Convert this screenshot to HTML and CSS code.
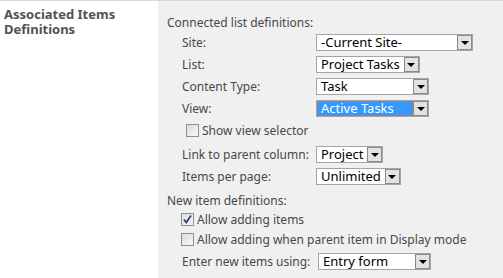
FILE: index.html
```html
<!DOCTYPE html>
<html lang="en">
<head>
  <meta charset="UTF-8" />
  <title>Associated Items Definitions</title>
  <link rel="stylesheet" href="styles.css">
</head>
<body>
  <div class="section">
    <div class="section-title">Associated Items Definitions</div>

    <div class="section-body">
      <div class="group-title">Connected list definitions:</div>

      <div class="fields">
        <div class="field">
          <label>Site:</label>
          <span class="dropdown w-site"><span class="value">-Current Site-</span><span class="arrow"></span></span>
        </div>
        <div class="field">
          <label>List:</label>
          <span class="dropdown"><span class="value">Project Tasks</span><span class="arrow"></span></span>
        </div>
        <div class="field">
          <label>Content Type:</label>
          <span class="dropdown w-type"><span class="value">Task</span><span class="arrow"></span></span>
        </div>
        <div class="field">
          <label>View:</label>
          <span class="dropdown w-type focused"><span class="value">Active Tasks</span><span class="arrow"></span></span>
        </div>
      </div>

      <div class="check view-check">
        <span class="box"></span>
        <span>Show view selector</span>
      </div>

      <div class="fields">
        <div class="field">
          <label>Link to parent column:</label>
          <span class="dropdown"><span class="value">Project</span><span class="arrow"></span></span>
        </div>
        <div class="field">
          <label>Items per page:</label>
          <span class="dropdown"><span class="value">Unlimited</span><span class="arrow"></span></span>
        </div>
      </div>

      <div class="group-title second">New item definitions:</div>

      <div class="check first">
        <span class="box checked">
          <svg width="11" height="11" viewBox="0 0 11 11"><path d="M2 5.5 L4.3 8.5 L9 1.5" fill="none" stroke="#2b3e8c" stroke-width="1.8"/></svg>
        </span>
        <span>Allow adding items</span>
      </div>
      <div class="check">
        <span class="box"></span>
        <span>Allow adding when parent item in Display mode</span>
      </div>

      <div class="field entry">
        <label>Enter new items using:</label>
        <span class="dropdown w-type"><span class="value">Entry form</span><span class="arrow"></span></span>
      </div>
    </div>
  </div>
</body>
</html>
```

FILE: styles.css
```css
body {
  margin: 0;
  font-family: "Noto Sans", "Open Sans", sans-serif;
  font-size: 12px;
  color: #484848;
  background: white;
}

.section {
  display: flex;
  height: 278px;
  border-top: 1px solid #d8d8d8;
  box-sizing: border-box;
}

.section-title {
  width: 154px;
  padding: 6px 0 0 4px;
  font-weight: 700;
  font-size: 13px;
  line-height: 15px;
  color: #525252;
}

.section-body {
  flex: 1;
  background: #f0f0f0;
  padding: 13px 0 0 9px;
}

.group-title {
  height: 18px;
  line-height: 18px;
}

.fields {
  display: flex;
  flex-direction: column;
  gap: 5px;
  padding-left: 15px;
  margin-top: 2px;
}

.fields + .group-title {
  margin-top: 7px;
}

.field {
  display: flex;
  align-items: center;
  height: 17px;
}

.field label {
  width: 134px;
  flex: none;
}

.dropdown {
  display: flex;
  height: 17px;
  box-sizing: border-box;
  border: 1px solid #a5a5a5;
  background: white;
  color: #000;
}

.dropdown .value {
  flex: 1;
  padding: 0 4px;
  line-height: 15px;
  font-size: 13px;
  white-space: nowrap;
}

.dropdown .arrow {
  width: 15px;
  flex: none;
  box-sizing: border-box;
  border: 1px solid #8a8a8a;
  background: #e2e2e2;
  display: flex;
  align-items: center;
  justify-content: center;
}

.dropdown .arrow::after {
  content: "";
  border-left: 4px solid transparent;
  border-right: 4px solid transparent;
  border-top: 4px solid #000;
}

.w-site { width: 157px; }
.w-type { width: 113px; }

.dropdown.focused .value {
  background: #3399ff;
  color: white;
  outline: 1px dotted #e07020;
  outline-offset: -1px;
}

.check {
  display: flex;
  align-items: center;
  gap: 3px;
  padding-left: 14px;
  height: 20px;
}

.check.first {
  margin-top: -1px;
}

.view-check {
  padding-left: 19px;
  margin: 3px 0 6px;
}

.box {
  width: 11px;
  height: 11px;
  border: 1px solid #8f8f8f;
  background: linear-gradient(135deg, #dcdcdc, #f7f7f7);
  display: flex;
  align-items: center;
  justify-content: center;
}

.field.entry {
  padding-left: 15px;
  margin-top: 4px;
}

.field.entry label {
  width: 136px;
}
```
